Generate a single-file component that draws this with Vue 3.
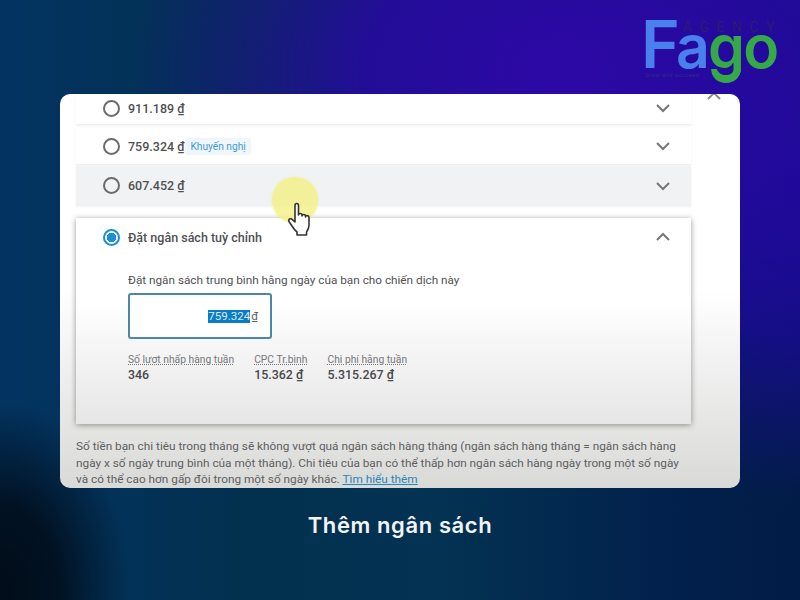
<script setup>
const presets = [
  { id: 1, amount: '911.189 ₫' },
  { id: 2, amount: '759.324 ₫', tag: 'Khuyến nghị' },
  { id: 3, amount: '607.452 ₫', hover: true },
]
const stats = [
  { label: 'Số lượt nhấp hàng tuần', value: '346' },
  { label: 'CPC Tr.bình', value: '15.362 ₫' },
  { label: 'Chi phí hằng tuần', value: '5.315.267 ₫' },
]
</script>

<template>
  <div class="page">
    <div class="logo">
      <span class="logo-word"><span class="blue big">F</span><span class="blue">a</span><span class="green">go</span></span>
      <span class="logo-agency">AGENCY</span>
      <span class="logo-sub">Grow and succeed</span>
      <svg class="logo-smile" width="32" height="16" viewBox="0 0 32 16">
        <path d="M1 1h6c1 5 4 8 9 8s8-3 9-8h6c-1 9-7 14-15 14S2 10 1 1z" fill="#35a94a" />
      </svg>
    </div>

    <main class="card">
      <svg class="card-chevron" width="16" height="10" viewBox="0 0 16 10">
        <path d="M2 8l6-6 6 6" fill="none" stroke="#8b8b8f" stroke-width="2" />
      </svg>

      <div class="presets">
        <div v-for="p in presets" :key="p.id" class="row" :class="{ hover: p.hover }">
          <span class="radio"></span>
          <span class="amount">{{ p.amount }}</span>
          <span v-if="p.tag" class="tag">{{ p.tag }}</span>
          <svg class="chevron" width="16" height="10" viewBox="0 0 16 10">
            <path d="M2 2l6 6 6-6" fill="none" stroke="#77777b" stroke-width="2" />
          </svg>
        </div>
      </div>

      <section class="panel">
        <div class="panel-head">
          <span class="radio on"></span>
          <span class="amount">Đặt ngân sách tuỳ chỉnh</span>
          <svg class="chevron" width="16" height="10" viewBox="0 0 16 10">
            <path d="M2 8l6-6 6 6" fill="none" stroke="#77777b" stroke-width="2" />
          </svg>
        </div>
        <p class="hint">Đặt ngân sách trung bình hằng ngày của bạn cho chiến dịch này</p>
        <div class="field"><span class="selected">759.324</span><span class="unit">₫</span></div>
        <div class="stats">
          <div v-for="s in stats" :key="s.label">
            <div class="stat-label">{{ s.label }}</div>
            <div class="stat-value">{{ s.value }}</div>
          </div>
        </div>
      </section>

      <p class="note">
        Số tiền bạn chi tiêu trong tháng sẽ không vượt quá ngân sách hàng tháng (ngân sách hàng tháng = ngân sách hàng<br />
        ngày x số ngày trung bình của một tháng). Chi tiêu của bạn có thể thấp hơn ngân sách hàng ngày trong một số ngày<br />
        và có thể cao hơn gấp đôi trong một số ngày khác. <a class="more">Tìm hiểu thêm</a>
      </p>

      <div class="cursor">
        <svg width="28" height="34" viewBox="0 0 28 34">
          <path d="M8 20V3.500c0-2.600 3.500-2.600 3.500 0V13c0-2 3.500-2 3.500 0v1c0-2 3.500-2 3.500 0v1c0-2 3.500-1.800 3.500.5V23c0 3-1 5-2.500 7v3H10v-3c-2-1.500-3.500-3.500-5-6l-3-4.500c-1.200-2.200 1.800-3.800 3.300-1.800z" fill="#fff" stroke="#333" stroke-width="1.600" stroke-linejoin="round" />
        </svg>
      </div>
    </main>

    <h1 class="title">Thêm ngân sách</h1>
  </div>
</template>

<style>
html, body { margin: 0; }
</style>

<style scoped>
.page {
  position: relative;
  width: 800px;
  height: 600px;
  overflow: hidden;
  box-sizing: border-box;
  padding-top: 94px;
  font-family: Roboto, "Liberation Sans", sans-serif;
  background:
    radial-gradient(430px 300px at 560px 70px, #2d08a6 0%, rgba(38, 9, 159, 0.9) 45%, rgba(38, 9, 159, 0) 100%),
    radial-gradient(300px 330px at 800px 170px, #1a0a96 0%, rgba(26, 10, 150, 0.8) 50%, rgba(20, 8, 140, 0) 100%),
    radial-gradient(130px 190px at 0 590px, #010c18 0%, rgba(1, 12, 24, 0.85) 45%, rgba(1, 12, 24, 0) 100%),
    linear-gradient(90deg, #033462 0%, #02304f 30%, #033252 55%, #02204c 85%, #011c46 100%);
}

.logo {
  position: absolute;
  left: 645px;
  top: 18px;
  width: 134px;
  height: 66px;
}
.logo-word {
  position: absolute;
  left: -4px;
  top: -6px;
  font-family: Inter, sans-serif;
  font-size: 59px;
  font-weight: 600;
  line-height: 70px;
  letter-spacing: -1.800px;
  white-space: nowrap;
}
.big {
  font-size: 66px;
  line-height: 0;
  margin-right: -2px;
}
.blue { color: #4a80ee; }
.green { color: #35a94a; }
.logo-agency {
  position: absolute;
  left: 38px;
  top: 1px;
  font-size: 14px;
  line-height: 16px;
  letter-spacing: 7.500px;
  color: #2b1c70;
}
.logo-sub {
  position: absolute;
  left: 0;
  top: 53px;
  font-size: 6px;
  line-height: 8px;
  letter-spacing: 0.3px;
  color: #2a2e8a;
  white-space: nowrap;
}
.logo-smile {
  position: absolute;
  left: 65px;
  top: 50px;
}

.card {
  position: relative;
  width: 680px;
  height: 394px;
  margin-left: 60px;
  box-sizing: border-box;
  padding: 0 49px 0 16px;
  border-radius: 10px;
  overflow: hidden;
  color: #4a4a4e;
  background: linear-gradient(180deg, #ffffff 0%, #ffffff 50%, #d9d9d8 100%);
}
.card-chevron {
  position: absolute;
  left: 646px;
  top: -3px;
}

.row {
  box-sizing: border-box;
  display: flex;
  align-items: center;
  gap: 8px;
  height: 38px;
  padding: 1px 20px 0 27px;
  margin-bottom: 1px;
  border-bottom: 1px solid #f0f0f0;
  box-shadow: 0 1px 3px rgba(0, 0, 0, 0.05);
}
.row:first-child {
  height: 31px;
  padding: 0 20px 2px 27px;
  margin-bottom: 2px;
}
.row.hover {
  height: 40px;
  padding-top: 0;
  background: #f1f2f3;
}
.radio {
  flex: none;
  box-sizing: border-box;
  width: 17px;
  height: 17px;
  border: 2px solid #6c6c6f;
  border-radius: 50%;
}
.radio.on {
  border-color: #1a8fd8;
  background: radial-gradient(circle, #1a8fd8 0 4.500px, #fff 5px);
}
.amount {
  font-size: 12.500px;
  font-weight: 500;
  color: #505054;
}
.tag {
  margin-left: -7px;
  padding: 2px 5px;
  font-size: 10.200px;
  line-height: 13px;
  color: #3f97d6;
  background: #f0f7fb;
  border-radius: 2px;
}
.chevron {
  margin-left: auto;
  flex: none;
}

.panel {
  box-sizing: border-box;
  height: 206px;
  margin-top: 12px;
  padding: 10px 20px 0 27px;
  background: linear-gradient(180deg, #ffffff 0%, #ffffff 40%, #e6e6e6 100%);
  box-shadow: 0 1px 6px rgba(0, 0, 0, 0.4);
}
.panel-head {
  display: flex;
  align-items: center;
  gap: 8px;
  height: 18px;
}
.hint {
  margin: 27px 0 0 25px;
  font-size: 11.750px;
  line-height: 14px;
  color: #515155;
}
.field {
  display: flex;
  justify-content: flex-end;
  align-items: center;
  box-sizing: border-box;
  width: 144px;
  height: 46px;
  margin: 6px 0 0 25px;
  padding: 1px 12px 0 0;
  border: 2px solid #4a87a8;
  border-radius: 3px;
  background: #fff;
  font-size: 11.600px;
  line-height: 13px;
}
.selected {
  color: #dcecf6;
  background: #0a7cc4;
}
.unit {
  margin-left: 1px;
  color: #5c5c60;
}
.stats {
  display: flex;
  gap: 20px;
  margin: 15px 0 0 25px;
}
.stat-label {
  font-size: 10.300px;
  line-height: 12px;
  margin-bottom: 1px;
  color: #77777b;
  text-decoration: underline dotted;
}
.stat-value {
  font-size: 12.400px;
  line-height: 15px;
  font-weight: 500;
  color: #48484c;
}

.note {
  margin: 14px 0 0;
  font-size: 11.800px;
  line-height: 16.500px;
  color: #5f5f62;
  white-space: nowrap;
}
.more {
  color: #2b86b8;
  text-decoration: underline;
}

.cursor {
  position: absolute;
  left: 212px;
  top: 83px;
  width: 46px;
  height: 46px;
  border-radius: 50%;
  background: rgba(243, 240, 130, 0.8);
  box-shadow: 0 0 3px rgba(243, 240, 130, 0.8);
}
.cursor svg {
  position: absolute;
  left: 15px;
  top: 25px;
}

.title {
  margin: 23px 0 0;
  text-align: center;
  font-family: Inter, "Open Sans", sans-serif;
  font-size: 22px;
  line-height: 28px;
  font-weight: 600;
  letter-spacing: 0.6px;
  color: #f2f4f7;
}
</style>
